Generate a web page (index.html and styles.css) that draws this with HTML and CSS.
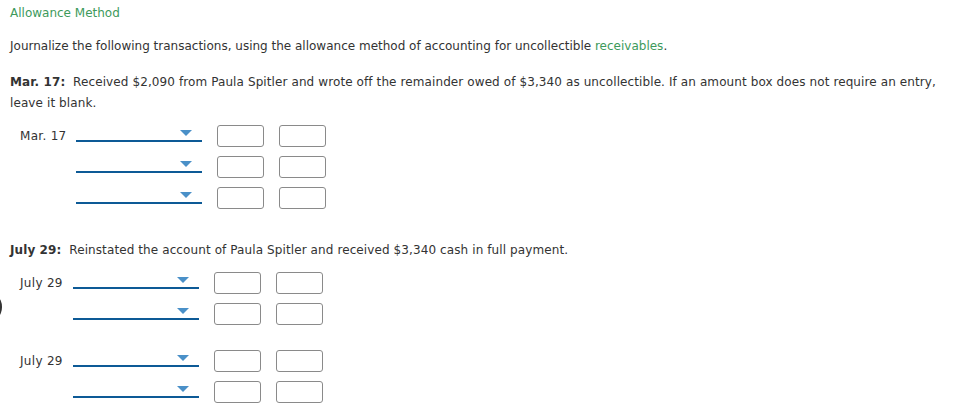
FILE: index.html
```html
<!DOCTYPE html>
<html lang="en">
<head>
  <meta charset="UTF-8" />
  <title>Allowance Method</title>
  <link rel="stylesheet" href="styles.css">
</head>
<body>

  <div class="title">Allowance Method</div>

  <p class="intro">Journalize the following transactions, using the allowance method of accounting for uncollectible <span class="term">receivables</span>.</p>

  <p class="task"><strong>Mar. 17:</strong> &nbsp;Received $2,090 from Paula Spitler and wrote off the remainder owed of $3,340 as uncollectible. If an amount box does not require an entry, leave it blank.</p>

  <div class="journal mar">
    <div class="entry">
      <div class="date">Mar. 17</div>
      <div class="account"><span class="arrow"></span></div>
      <div class="amount"></div>
      <div class="amount"></div>
    </div>
    <div class="entry">
      <div class="date"></div>
      <div class="account"><span class="arrow"></span></div>
      <div class="amount"></div>
      <div class="amount"></div>
    </div>
    <div class="entry">
      <div class="date"></div>
      <div class="account"><span class="arrow"></span></div>
      <div class="amount"></div>
      <div class="amount"></div>
    </div>
  </div>

  <p class="task second"><strong>July 29:</strong> &nbsp;Reinstated the account of Paula Spitler and received $3,340 cash in full payment.</p>

  <div class="journal jul">
    <div class="entry">
      <div class="date">July 29</div>
      <div class="account"><span class="arrow"></span></div>
      <div class="amount"></div>
      <div class="amount"></div>
    </div>
    <div class="entry">
      <div class="date"></div>
      <div class="account"><span class="arrow"></span></div>
      <div class="amount"></div>
      <div class="amount"></div>
    </div>
  </div>

  <div class="journal jul third">
    <div class="entry">
      <div class="date">July 29</div>
      <div class="account"><span class="arrow"></span></div>
      <div class="amount"></div>
      <div class="amount"></div>
    </div>
    <div class="entry">
      <div class="date"></div>
      <div class="account"><span class="arrow"></span></div>
      <div class="amount"></div>
      <div class="amount"></div>
    </div>
  </div>

  <div class="edge-dot"></div>

</body>
</html>
```

FILE: styles.css
```css
body {
  margin: 0;
  padding: 5px 10px 0 10px;
  font-family: "DejaVu Sans", Verdana, sans-serif;
  font-size: 12px;
  color: #333;
  background: #fff;
  position: relative;
  overflow: hidden;
}
.title {
  color: #3d9a5b;
  line-height: 15px;
  margin-top: 1px;
}
.intro {
  margin: 17px 0 0 0;
  line-height: 16px;
}
.term {
  color: #3d9a5b;
}
.task {
  margin: 18px 0 0 0;
  line-height: 21px;
  letter-spacing: 0.1px;
}
.task.second {
  margin-top: 22px;
}
.journal {
  margin: 11px 0 0 10px;
}
.journal.third {
  margin-top: 16px;
}
.entry {
  display: flex;
  align-items: flex-start;
  height: 31px;
}
.date {
  width: 56px;
  padding-top: 4px;
  line-height: 15px;
  white-space: nowrap;
  letter-spacing: 0.3px;
}
.jul .date {
  width: 53px;
}
.account {
  position: relative;
  width: 126px;
  height: 15px;
  border-bottom: 2px solid #0d5a96;
}
.arrow {
  position: absolute;
  right: 10px;
  top: 5px;
  width: 0;
  height: 0;
  border-left: 6px solid transparent;
  border-right: 6px solid transparent;
  border-top: 6px solid #4a90c8;
}
.amount {
  width: 45px;
  height: 20px;
  border: 1px solid #8a8a8a;
  border-radius: 3px;
  margin-left: 15px;
}
.edge-dot {
  position: absolute;
  left: -6px;
  top: 298px;
  width: 8px;
  height: 18px;
  border-radius: 50%;
  background: #333;
}
```
